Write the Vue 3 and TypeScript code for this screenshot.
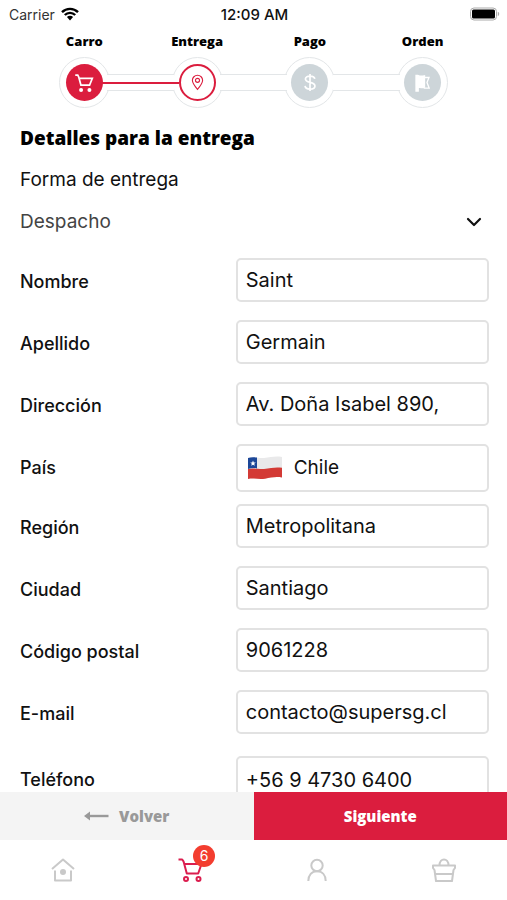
<script setup lang="ts">
import { ref } from 'vue'

interface Step {
  name: string
  icon: 'cart' | 'pin' | 'dollar' | 'flag'
  state: 'done' | 'current' | 'pending'
}

interface Field {
  id: string
  label: string
  value: string
  kind: 'text' | 'country' | 'phone'
  type: string
}

const steps: Step[] = [
  { name: 'Carro', icon: 'cart', state: 'done' },
  { name: 'Entrega', icon: 'pin', state: 'current' },
  { name: 'Pago', icon: 'dollar', state: 'pending' },
  { name: 'Orden', icon: 'flag', state: 'pending' },
]

const fields = ref<Field[]>([
  { id: 'nombre', label: 'Nombre', value: 'Saint', kind: 'text', type: 'text' },
  { id: 'apellido', label: 'Apellido', value: 'Germain', kind: 'text', type: 'text' },
  { id: 'direccion', label: 'Dirección', value: 'Av. Doña Isabel 890,', kind: 'text', type: 'text' },
  { id: 'pais', label: 'País', value: 'Chile', kind: 'country', type: 'text' },
  { id: 'region', label: 'Región', value: 'Metropolitana', kind: 'text', type: 'text' },
  { id: 'ciudad', label: 'Ciudad', value: 'Santiago', kind: 'text', type: 'text' },
  { id: 'postal', label: 'Código postal', value: '9061228', kind: 'text', type: 'text' },
  { id: 'email', label: 'E-mail', value: 'contacto@supersg.cl', kind: 'text', type: 'email' },
  { id: 'telefono', label: 'Teléfono', value: '+56 9 4730 6400', kind: 'phone', type: 'tel' },
])

const delivery = ref('Despacho')
const cartCount = ref(6)
</script>

<template>
  <div class="screen">
    <header class="status">
      <span class="carrier">
        Carrier
        <svg class="wifi" viewBox="0 0 18 14" aria-hidden="true">
          <path d="M1 5.2C5.5.7 12.500.7 17 5.200" />
          <path d="M3.800 8C6.700 5.100 11.300 5.100 14.200 8" />
          <path class="solid" d="M5.900 10.100a4.400 4.400 0 0 1 6.200 0L9 13.400z" />
        </svg>
      </span>
      <span class="clock">12:09 AM</span>
      <svg class="battery" viewBox="0 0 31 14" aria-hidden="true">
        <rect class="shell" x="1.500" y="1" width="26" height="12" rx="3.500" />
        <rect x="3" y="2.500" width="23" height="9" rx="1.500" />
        <path class="tip" d="M28.800 4.800a2.400 2.400 0 0 1 0 4.400z" />
      </svg>
    </header>

    <ol class="steps">
      <li v-for="step in steps" :key="step.name" class="step" :class="step.state">
        <span class="step-name">{{ step.name }}</span>
        <span class="halo">
          <span class="disc">
            <svg v-if="step.icon === 'cart'" class="cart" viewBox="0 0 24 24" aria-hidden="true">
              <path d="M1.500 2.500h3l1.200 2.500 2.600 9.500h10.400L22 6.500H6.200" />
              <circle class="wheel" cx="8.500" cy="20.500" r="2.400" />
              <circle class="wheel" cx="18.500" cy="20.500" r="2.400" />
            </svg>
            <svg v-else-if="step.icon === 'pin'" class="pin" viewBox="0 0 14 18" aria-hidden="true">
              <path d="M7 16.500C4 13 1.500 10 1.500 6.700a5.500 5.500 0 0 1 11 0C12.500 10 10 13 7 16.500z" />
              <circle cx="7" cy="6.700" r="2.200" />
            </svg>
            <svg v-else-if="step.icon === 'dollar'" class="dollar" viewBox="0 0 14 20" aria-hidden="true">
              <path d="M12 6.200C11.800 4.300 9.800 3.200 7 3.200c-2.900 0-4.800 1.200-4.800 3.200 0 4.700 10 2.300 10 7.200 0 2-2.100 3.300-5.200 3.300-3 0-5-1.200-5.200-3.300M7 1v18" />
            </svg>
            <svg v-else class="flag" viewBox="0 0 16 18" aria-hidden="true">
              <path class="solid" d="M1 1.500h2c2 1 4 1 6.500.3V13c-2.500.7-4.500.6-6.300.1V17H1z" />
              <path d="M9.500 3.500H14L12 8.500l2.200 5.700H9.300L8 13" />
            </svg>
          </span>
        </span>
      </li>
    </ol>

    <main class="content">
      <h1>Detalles para la entrega</h1>
      <label class="subtitle" for="forma">Forma de entrega</label>
      <div class="delivery">
        <select id="forma" v-model="delivery">
          <option>Despacho</option>
        </select>
        <svg class="chevron" viewBox="0 0 16 10" aria-hidden="true">
          <path d="M2 2l6 6 6-6" />
        </svg>
      </div>

      <form class="form" @submit.prevent>
        <div v-for="field in fields" :key="field.id" class="row" :class="field.kind">
          <label :for="field.id">{{ field.label }}</label>
          <div class="box">
            <template v-if="field.kind === 'country'">
              <svg class="chile" viewBox="0 0 34 24" aria-hidden="true">
                <path class="white" d="M0 2C6 0 10 2.500 16 2 23 1 28-.2 34 1v20.500c-6-1.200-11 0-17 1.200C10 23.800 6 21.500 0 23z" />
                <path class="red" d="M0 13C6 11.500 10 13.500 16 13c7-1 12-2.200 18-1.200v9.700c-6-1.200-11 0-17 1.200C10 23.800 6 21.500 0 23z" />
                <path class="blue" d="M0 2c3-1 6-1 9-.4v10.800c-3-.6-6-.4-9 .6z" />
                <path class="star" d="M5 4.500l.8 1.900 2 .1-1.600 1.300.6 2L5 8.700 3.200 9.800l.6-2-1.600-1.300 2-.1z" />
              </svg>
              <select :id="field.id" v-model="field.value">
                <option>Chile</option>
              </select>
            </template>
            <input v-else :id="field.id" v-model="field.value" :type="field.type" />
          </div>
        </div>
      </form>
    </main>

    <div class="actions">
      <button type="button" class="back">
        <svg class="arrow" viewBox="0 0 25 10" aria-hidden="true">
          <path d="M0 5L6 .5v9z" />
          <path d="M5 3.800h19.500v2.400H5z" />
        </svg>
        Volver
      </button>
      <button type="button" class="next">Siguiente</button>
    </div>

    <nav class="tabs">
      <a href="#inicio" aria-label="Inicio">
        <svg viewBox="0 0 24 24" aria-hidden="true">
          <path d="M1 11L12 1.500 23 11M4 12.500V22.500h16V12.500" />
          <circle class="dot" cx="12" cy="14" r="3" />
        </svg>
      </a>
      <a href="#carro" class="active" aria-label="Carro">
        <span class="badge-anchor">
          <svg viewBox="0 0 24 24" aria-hidden="true">
            <path d="M.5 1.500h3.700l1.300 1.800 3.300 12.200h11.400L23.500 6H6.500" />
            <circle cx="8" cy="21" r="2" />
            <circle cx="20.500" cy="21" r="2" />
          </svg>
          <span class="badge">{{ cartCount }}</span>
        </span>
      </a>
      <a href="#perfil" aria-label="Perfil">
        <svg viewBox="0 0 24 24" aria-hidden="true">
          <circle cx="12" cy="7.500" r="5.700" />
          <path d="M3.300 23c0-6 3.500-9.800 8.700-9.800s8.700 3.800 8.700 9.800" />
        </svg>
      </a>
      <a href="#tienda" aria-label="Tienda">
        <svg viewBox="0 0 24 24" aria-hidden="true">
          <path d="M1 7.500h22v2.500l-1.500 2L20 23H4L2.500 12 1 10zM3.500 16h17M7.500 7.500c0-8 9-8 9 0" />
        </svg>
      </a>
    </nav>
  </div>
</template>

<style>
body {
  background: #fff;
}
</style>

<style scoped>
.screen {
  display: flex;
  flex-direction: column;
  height: 100vh;
  overflow: hidden;
  color: #111;
  background: #fff;
  font-family: Inter, "Liberation Sans", sans-serif;
}

svg {
  display: block;
  flex: none;
  fill: none;
  stroke: currentColor;
}

.status {
  display: grid;
  grid-template-columns: 1fr auto 1fr;
  align-items: center;
  height: 28px;
  padding: 0 7px 0 9px;
  flex: none;
  font-size: 14px;
}

.carrier {
  display: flex;
  align-items: center;
  gap: 6px;
  color: #333;
}

.wifi {
  width: 18px;
  height: 14px;
  color: #000;
  stroke-width: 2.4;
}

.wifi .solid {
  fill: #000;
  stroke: none;
}

.clock {
  font-size: 15px;
  font-weight: 500;
}

.battery {
  width: 31px;
  height: 14px;
  justify-self: end;
  fill: #000;
  stroke: none;
}

.battery .shell {
  fill: #fff;
  stroke: #aaa;
}

.battery .tip {
  fill: #aaa;
}

.steps {
  display: grid;
  grid-template-columns: repeat(4, 1fr);
  flex: none;
  margin: 0;
  padding: 4px 28px 0;
  list-style: none;
}

.step {
  position: relative;
  display: flex;
  flex-direction: column;
  align-items: center;
  gap: 7px;
}

.step-name {
  font: 800 13px/18px "Open Sans", sans-serif;
  color: #000;
}

.halo {
  display: flex;
  align-items: center;
  justify-content: center;
  box-sizing: border-box;
  width: 51px;
  height: 51px;
  border: 1px solid #e3e6e8;
  border-radius: 50%;
}

.disc {
  display: flex;
  align-items: center;
  justify-content: center;
  box-sizing: border-box;
  width: 37px;
  height: 37px;
  border-radius: 50%;
  background: #cdd5d9;
  color: #fff;
}

.done .disc {
  background: #db1d3e;
}

.current .disc {
  border: 2px solid #db1d3e;
  background: #fff;
  color: #db1d3e;
}

/* Track that joins a step to the next one */
.step:not(:last-child)::before {
  content: "";
  position: absolute;
  z-index: 1;
  bottom: 17px;
  left: calc(50% + 23px);
  box-sizing: border-box;
  width: calc(100% - 46px);
  height: 17px;
  border: solid #e3e6e8;
  border-width: 1px 0;
  background: #fff;
}

.done::after {
  content: "";
  position: absolute;
  z-index: 2;
  bottom: 24px;
  left: calc(50% + 18px);
  width: calc(100% - 36px);
  height: 2px;
  background: #db1d3e;
}

.disc .cart {
  width: 20px;
  height: 20px;
  stroke-width: 2;
}

.disc .wheel {
  fill: currentColor;
  stroke: none;
}

.pin {
  width: 13px;
  height: 17px;
  stroke-width: 1.2;
}

.dollar {
  width: 14px;
  height: 19px;
  stroke-width: 1.8;
}

.flag {
  width: 16px;
  height: 18px;
  stroke-width: 1.3;
}

.flag .solid {
  fill: currentColor;
}

.content {
  flex: 1;
  min-height: 0;
  overflow: hidden;
  padding: 16px 18px 0 20px;
}

h1 {
  margin: 0;
  color: #000;
  font: 800 19px/28px "Open Sans", sans-serif;
}

.subtitle {
  display: block;
  margin-top: 16px;
  font-size: 19px;
  line-height: 24px;
}

.delivery {
  display: grid;
  align-items: center;
  margin-top: 16px;
}

.delivery > * {
  grid-area: 1 / 1;
}

select,
input {
  appearance: none;
  box-sizing: border-box;
  width: 100%;
  min-width: 0;
  margin: 0;
  padding: 0;
  border: 0;
  outline: 0;
  background: none;
  color: #111;
  font: 400 19px/28px Inter, "Liberation Sans", sans-serif;
}

input {
  font-size: 20px;
}

.delivery select {
  color: #444;
}

.chevron {
  justify-self: end;
  width: 16px;
  height: 10px;
  margin-right: 7px;
  stroke-width: 2.2;
  stroke-linecap: round;
  stroke-linejoin: round;
  pointer-events: none;
}

.form {
  display: flex;
  flex-direction: column;
  margin-top: 22px;
}

.row {
  display: grid;
  grid-template-columns: 46fr 54fr;
  align-items: center;
  margin-bottom: 18px;
}

.row label {
  padding-top: 4px;
  font-size: 18px;
  line-height: 24px;
  font-weight: 500;
}

.box {
  display: flex;
  align-items: center;
  gap: 12px;
  box-sizing: border-box;
  height: 44px;
  padding: 0 10px;
  border: 2px solid #e2e2e2;
  border-radius: 5px;
}

.text .box,
.phone .box {
  padding: 0 8px;
}

.country .box,
.phone .box {
  height: 48px;
}

.country label,
.phone label {
  padding-top: 0;
}

.country {
  margin-bottom: 12px;
}

.phone {
  margin-top: 4px;
}

.chile {
  width: 34px;
  height: 24px;
  stroke: none;
}

.chile .white {
  fill: #e9e9ea;
}

.chile .red {
  fill: #d33a35;
}

.chile .blue {
  fill: #1c4798;
}

.chile .star {
  fill: #fff;
}

.actions {
  display: grid;
  grid-template-columns: 1fr 1fr;
  flex: none;
  height: 48px;
}

.actions button {
  display: flex;
  align-items: center;
  justify-content: center;
  gap: 10px;
  margin: 0;
  padding: 0;
  border: 0;
  font: 800 15px/20px "Open Sans", sans-serif;
}

.actions .back {
  background: #f4f4f4;
  color: #999;
}

.actions .next {
  background: #db1d3e;
  color: #fff;
}

.arrow {
  width: 25px;
  height: 10px;
  fill: currentColor;
  stroke: none;
}

.tabs {
  display: grid;
  grid-template-columns: repeat(4, 1fr);
  flex: none;
  height: 60px;
}

.tabs a {
  display: flex;
  align-items: center;
  justify-content: center;
  color: #c9c9c9;
}

.tabs svg {
  width: 24px;
  height: 24px;
  stroke-width: 2;
  stroke-linejoin: round;
}

.tabs .dot {
  fill: currentColor;
  stroke: none;
}

.tabs .active {
  color: #db1d4e;
}

.badge-anchor {
  position: relative;
}

.badge {
  position: absolute;
  top: -13px;
  right: -13px;
  width: 22px;
  height: 22px;
  border-radius: 50%;
  background: #f33d2f;
  color: #fff;
  font-size: 14px;
  line-height: 22px;
  text-align: center;
}
</style>
